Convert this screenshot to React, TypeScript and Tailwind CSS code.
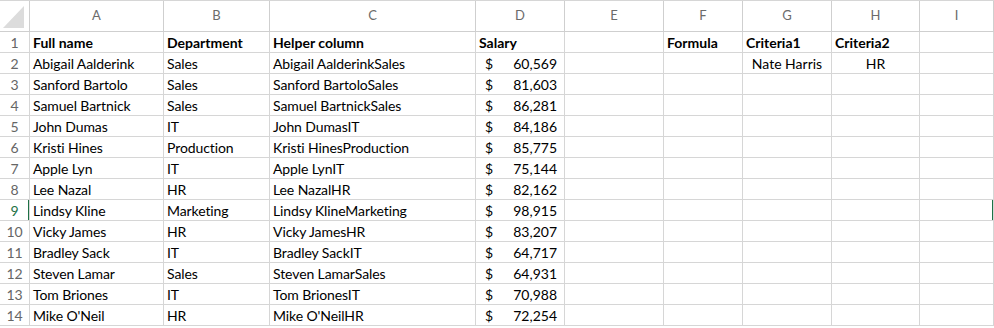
import React from 'react'

const cols = ['A', 'B', 'C', 'D', 'E', 'F', 'G', 'H', 'I']

const rows = [
  ['Abigail Aalderink', 'Sales', '60,569'],
  ['Sanford Bartolo', 'Sales', '81,603'],
  ['Samuel Bartnick', 'Sales', '86,281'],
  ['John Dumas', 'IT', '84,186'],
  ['Kristi Hines', 'Production', '85,775'],
  ['Apple Lyn', 'IT', '75,144'],
  ['Lee Nazal', 'HR', '82,162'],
  ['Lindsy Kline', 'Marketing', '98,915'],
  ['Vicky James', 'HR', '83,207'],
  ['Bradley Sack', 'IT', '64,717'],
  ['Steven Lamar', 'Sales', '64,931'],
  ['Tom Briones', 'IT', '70,988'],
  ['Mike O\'Neil', 'HR', '72,254'],
]

const grid = 'grid grid-cols-[30px_134px_106px_206px_89px_99px_79px_89px_88px_1fr]'
const cell = 'h-[21px] border-r border-b border-[#d6d6d6] px-[3px] flex items-center whitespace-nowrap overflow-hidden'

export default function App() {
  return (
    <div className="w-[994px] h-[328px] bg-white overflow-hidden text-[14px] text-black" style={{ fontFamily: 'Lato, "Open Sans", sans-serif' }}>
      {/* column headers */}
      <div className={`${grid} h-[32px] border-t border-[#d6d6d6]`}>
        <div className="border-r border-b border-[#cfcfcf] relative">
          <svg width="29" height="30" className="absolute left-0 top-0">
            <polygon points="24,5 24,27 3,27" fill="#dcdcdc" />
          </svg>
        </div>
        {cols.map((c) => (
          <div key={c} className="border-r border-b border-[#cfcfcf] flex items-center justify-center text-[#6b6b6b] text-[13px]">
            {c}
          </div>
        ))}
      </div>

      {/* row 1 */}
      <div className={`${grid} font-bold`}>
        <div className={`${cell} justify-center font-normal text-[#666666]`}>1</div>
        <div className={cell}>Full name</div>
        <div className={cell}>Department</div>
        <div className={cell}>Helper column</div>
        <div className={cell}>Salary</div>
        <div className={cell}></div>
        <div className={cell}>Formula</div>
        <div className={cell}>Criteria1</div>
        <div className={cell}>Criteria2</div>
        <div className={cell}></div>
      </div>

      {rows.map((r, i) => {
        const n = i + 2
        const active = n === 9
        return (
          <div key={n} className={grid}>
            <div className={`${cell} justify-center relative ${active ? 'text-[#1e7145]' : 'text-[#666666]'}`}>
              {n}
              {active && <div className="absolute right-[-1px] top-0 w-[2px] h-[21px] bg-[#1e7145]" />}
            </div>
            <div className={`${cell} tracking-[-0.1px]`}>{r[0]}</div>
            <div className={`${cell} tracking-[-0.1px]`}>{r[1]}</div>
            <div className={`${cell} tracking-[-0.1px]`}>{r[0] + r[1]}</div>
            <div className={`${cell} justify-between pl-[9px] pr-[7px]`}>
              <span>$</span>
              <span>{r[2]}</span>
            </div>
            <div className={cell}></div>
            <div className={cell}></div>
            <div className={`${cell} justify-center`}>{n === 2 ? 'Nate Harris' : ''}</div>
            <div className={`${cell} justify-center`}>{n === 2 ? 'HR' : ''}</div>
            <div className={`${cell} relative`}>
              {active && <div className="absolute left-[72px] top-[-1px] w-[3px] h-[22px] bg-[#1e7145]" />}
            </div>
          </div>
        )
      })}
    </div>
  )
}
